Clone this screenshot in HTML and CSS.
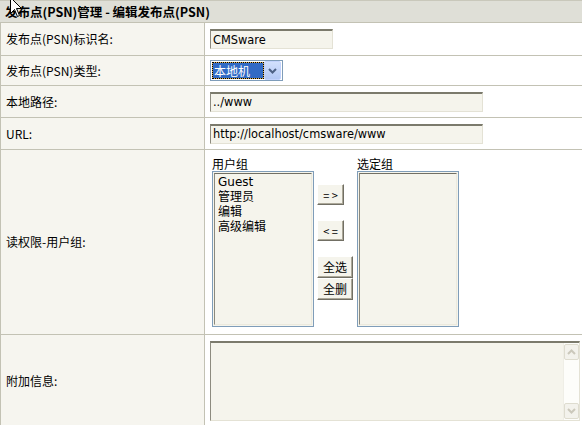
FILE: index.html
```html
<!DOCTYPE html>
<html lang="zh">
<head>
<meta charset="utf-8">
<title>发布点(PSN)管理 - 编辑发布点(PSN)</title>
<link rel="stylesheet" href="styles.css">
</head>
<body>
<div class="form">
  <div class="hdr">发布点(PSN)管理 - 编辑发布点(PSN)</div>

  <div class="lab">发布点(PSN)标识名:</div>
  <div class="val"><input class="txt w1" type="text" value="CMSware" readonly></div>

  <div class="lab">发布点(PSN)类型:</div>
  <div class="val">
    <div class="sel">
      <span class="sel-val">本地机</span>
      <span class="sel-btn">
        <svg width="9" height="6" viewBox="0 0 9 6"><path d="M1 1 L4.5 4.5 L8 1" fill="none" stroke="#4d6185" stroke-width="2"/></svg>
      </span>
    </div>
  </div>

  <div class="lab">本地路径:</div>
  <div class="val"><input class="txt w2" type="text" value="../www" readonly></div>

  <div class="lab">URL:</div>
  <div class="val"><input class="txt w2" type="text" value="http://localhost/cmsware/www" readonly></div>

  <div class="lab">读权限-用户组:</div>
  <div class="val group">
    <div class="gcol">
      <div class="glabel">用户组</div>
      <div class="list"><div class="list-in">
        <div>Guest</div><div>管理员</div><div>编辑</div><div>高级编辑</div>
      </div></div>
    </div>
    <div class="bcol">
      <button class="btn b-arrow">= &gt;</button>
      <button class="btn b-arrow gap">&lt; =</button>
      <button class="btn b-wide gap">全选</button>
      <button class="btn b-wide">全删</button>
    </div>
    <div class="gcol">
      <div class="glabel">选定组</div>
      <div class="list"><div class="list-in"></div></div>
    </div>
  </div>

  <div class="lab last">附加信息:</div>
  <div class="val last">
    <div class="ta">
      <div class="sb">
        <span class="sb-btn"><svg width="9" height="6" viewBox="0 0 9 6"><path d="M1 5 L4.5 1.5 L8 5" fill="none" stroke="#cbc8bb" stroke-width="2"/></svg></span>
        <span class="sb-btn"><svg width="9" height="6" viewBox="0 0 9 6"><path d="M1 1 L4.5 4.5 L8 1" fill="none" stroke="#cbc8bb" stroke-width="2"/></svg></span>
      </div>
    </div>
  </div>
</div>
<svg class="cursor" width="14" height="21" viewBox="0 0 14 21"><path d="M0.5 0.5 L0.5 16.5 L4.5 12.5 L7.5 19.5 L9.5 18.5 L6.5 11.5 L11.5 11.5 Z" fill="#fff" stroke="#000" stroke-width="1"/></svg>
</body>
</html>
```

FILE: styles.css
```css
html, body {
  margin: 0;
  padding: 0;
  background: #fff;
}
body {
  font: 12px "Noto Sans CJK SC", "DejaVu Sans", sans-serif;
  color: #000;
  position: relative;
  overflow: hidden;
  width: 582px;
  height: 425px;
}
.form {
  display: grid;
  grid-template-columns: 205px 1fr;
  grid-template-rows: 23px 33px 30px 32px 32px 185px 91px;
  width: 582px;
}
.hdr {
  grid-column: 1 / 3;
  box-sizing: border-box;
  background: #dfdfd7;
  border-top: 1px solid #c9c8bb;
  border-bottom: 1px solid #c3c2b4;
  font-weight: bold;
  font-size: 12.5px;
  padding: 1px 0 0 5px;
  display: flex;
  align-items: center;
  line-height: 1;
}
.lab {
  box-sizing: border-box;
  background: #f6f5ef;
  border-left: 1px solid #c3c2b4;
  border-right: 1px solid #c3c2b4;
  border-bottom: 1px solid #c3c2b4;
  padding-left: 5px;
  display: flex;
  align-items: center;
  line-height: 1;
}
.val {
  box-sizing: border-box;
  border-bottom: 1px solid #c3c2b4;
  padding-left: 5px;
  display: flex;
  align-items: center;
}
.last { border-bottom: none; }

.txt {
  box-sizing: border-box;
  height: 20px;
  margin: 0;
  padding: 0 0 0 2px;
  border-style: solid;
  border-width: 2px 1px 1px 1px;
  border-color: #7b7a6c #e4e2d5 #e4e2d5 #8d8b7f;
  background: #f5f4ec;
  font: 11.4px "DejaVu Sans", "Noto Sans CJK SC", sans-serif;
  color: #000;
  outline: none;
}
.w1 { width: 123px; }
.w2 { width: 273px; }

.sel {
  box-sizing: border-box;
  width: 73px;
  height: 21px;
  border: 1px solid #7f9db9;
  background: #fff;
  display: flex;
  align-items: center;
  padding: 0 1px 0 1px;
}
.sel-val {
  box-sizing: border-box;
  width: 52px;
  height: 17px;
  border: 1px dotted #000;
  background: linear-gradient(#316ac5, #316ac5) padding-box, #d8ad50 border-box;
  color: #fff;
  padding-left: 1px;
  line-height: 15px;
}
.sel-btn {
  box-sizing: border-box;
  margin-left: auto;
  width: 17px;
  height: 19px;
  border: 1px solid #c3d3fd;
  border-radius: 2px;
  background: linear-gradient(#d2e0fd, #b3c8f5);
  display: flex;
  align-items: center;
  justify-content: center;
}

.group {
  align-items: flex-start;
  padding: 6px 0 0 7px;
}
.gcol {
  display: flex;
  flex-direction: column;
}
.glabel {
  height: 15px;
  line-height: 15px;
}
.list {
  box-sizing: border-box;
  width: 102px;
  height: 156px;
  border: 1px solid #7f9db9;
  padding: 1px;
  background: #f5f4ec;
}
.list-in {
  box-sizing: border-box;
  height: 100%;
  border-style: solid;
  border-width: 1px;
  border-color: #716f64 #ebe9dd #ebe9dd #8b897d;
  padding: 1px 3px;
  line-height: 15px;
  font-family: "DejaVu Sans", "Noto Sans CJK SC", sans-serif;
}
.bcol {
  display: flex;
  flex-direction: column;
  align-items: flex-start;
  width: 36px;
  margin: 0 4px 0 3px;
  padding-top: 28px;
}
.btn {
  box-sizing: border-box;
  height: 21px;
  margin: 0;
  padding: 0;
  border: 1px solid;
  border-color: #fff #716f64 #716f64 #fff;
  box-shadow: inset -1px -1px 0 #aca899;
  background: #f5f4ec;
  font: 12px "Noto Sans CJK SC", "DejaVu Sans", sans-serif;
  color: #000;
  line-height: 18px;
  white-space: nowrap;
}
.b-arrow { width: 27px; font-size: 11px; }
.b-wide { width: 36px; height: 22px; }
.gap { margin-top: 15px; }

.ta {
  box-sizing: border-box;
  width: 370px;
  height: 80px;
  border-style: solid;
  border-width: 2px 1px 1px 1px;
  border-color: #7b7a6c #e4e2d5 #e4e2d5 #8d8b7f;
  background: #f5f4ec;
  display: flex;
  justify-content: flex-end;
}
.sb {
  width: 15px;
  background: #fdfdfa;
  border-left: 1px solid #efeee6;
  display: flex;
  flex-direction: column;
  justify-content: space-between;
  padding: 1px 0;
}
.sb-btn {
  box-sizing: border-box;
  width: 15px;
  height: 16px;
  border: 1px solid #dedccf;
  border-radius: 2px;
  background: #f3f2ec;
  display: flex;
  align-items: center;
  justify-content: center;
}

.cursor {
  position: absolute;
  left: 10px;
  top: -3px;
}
```
